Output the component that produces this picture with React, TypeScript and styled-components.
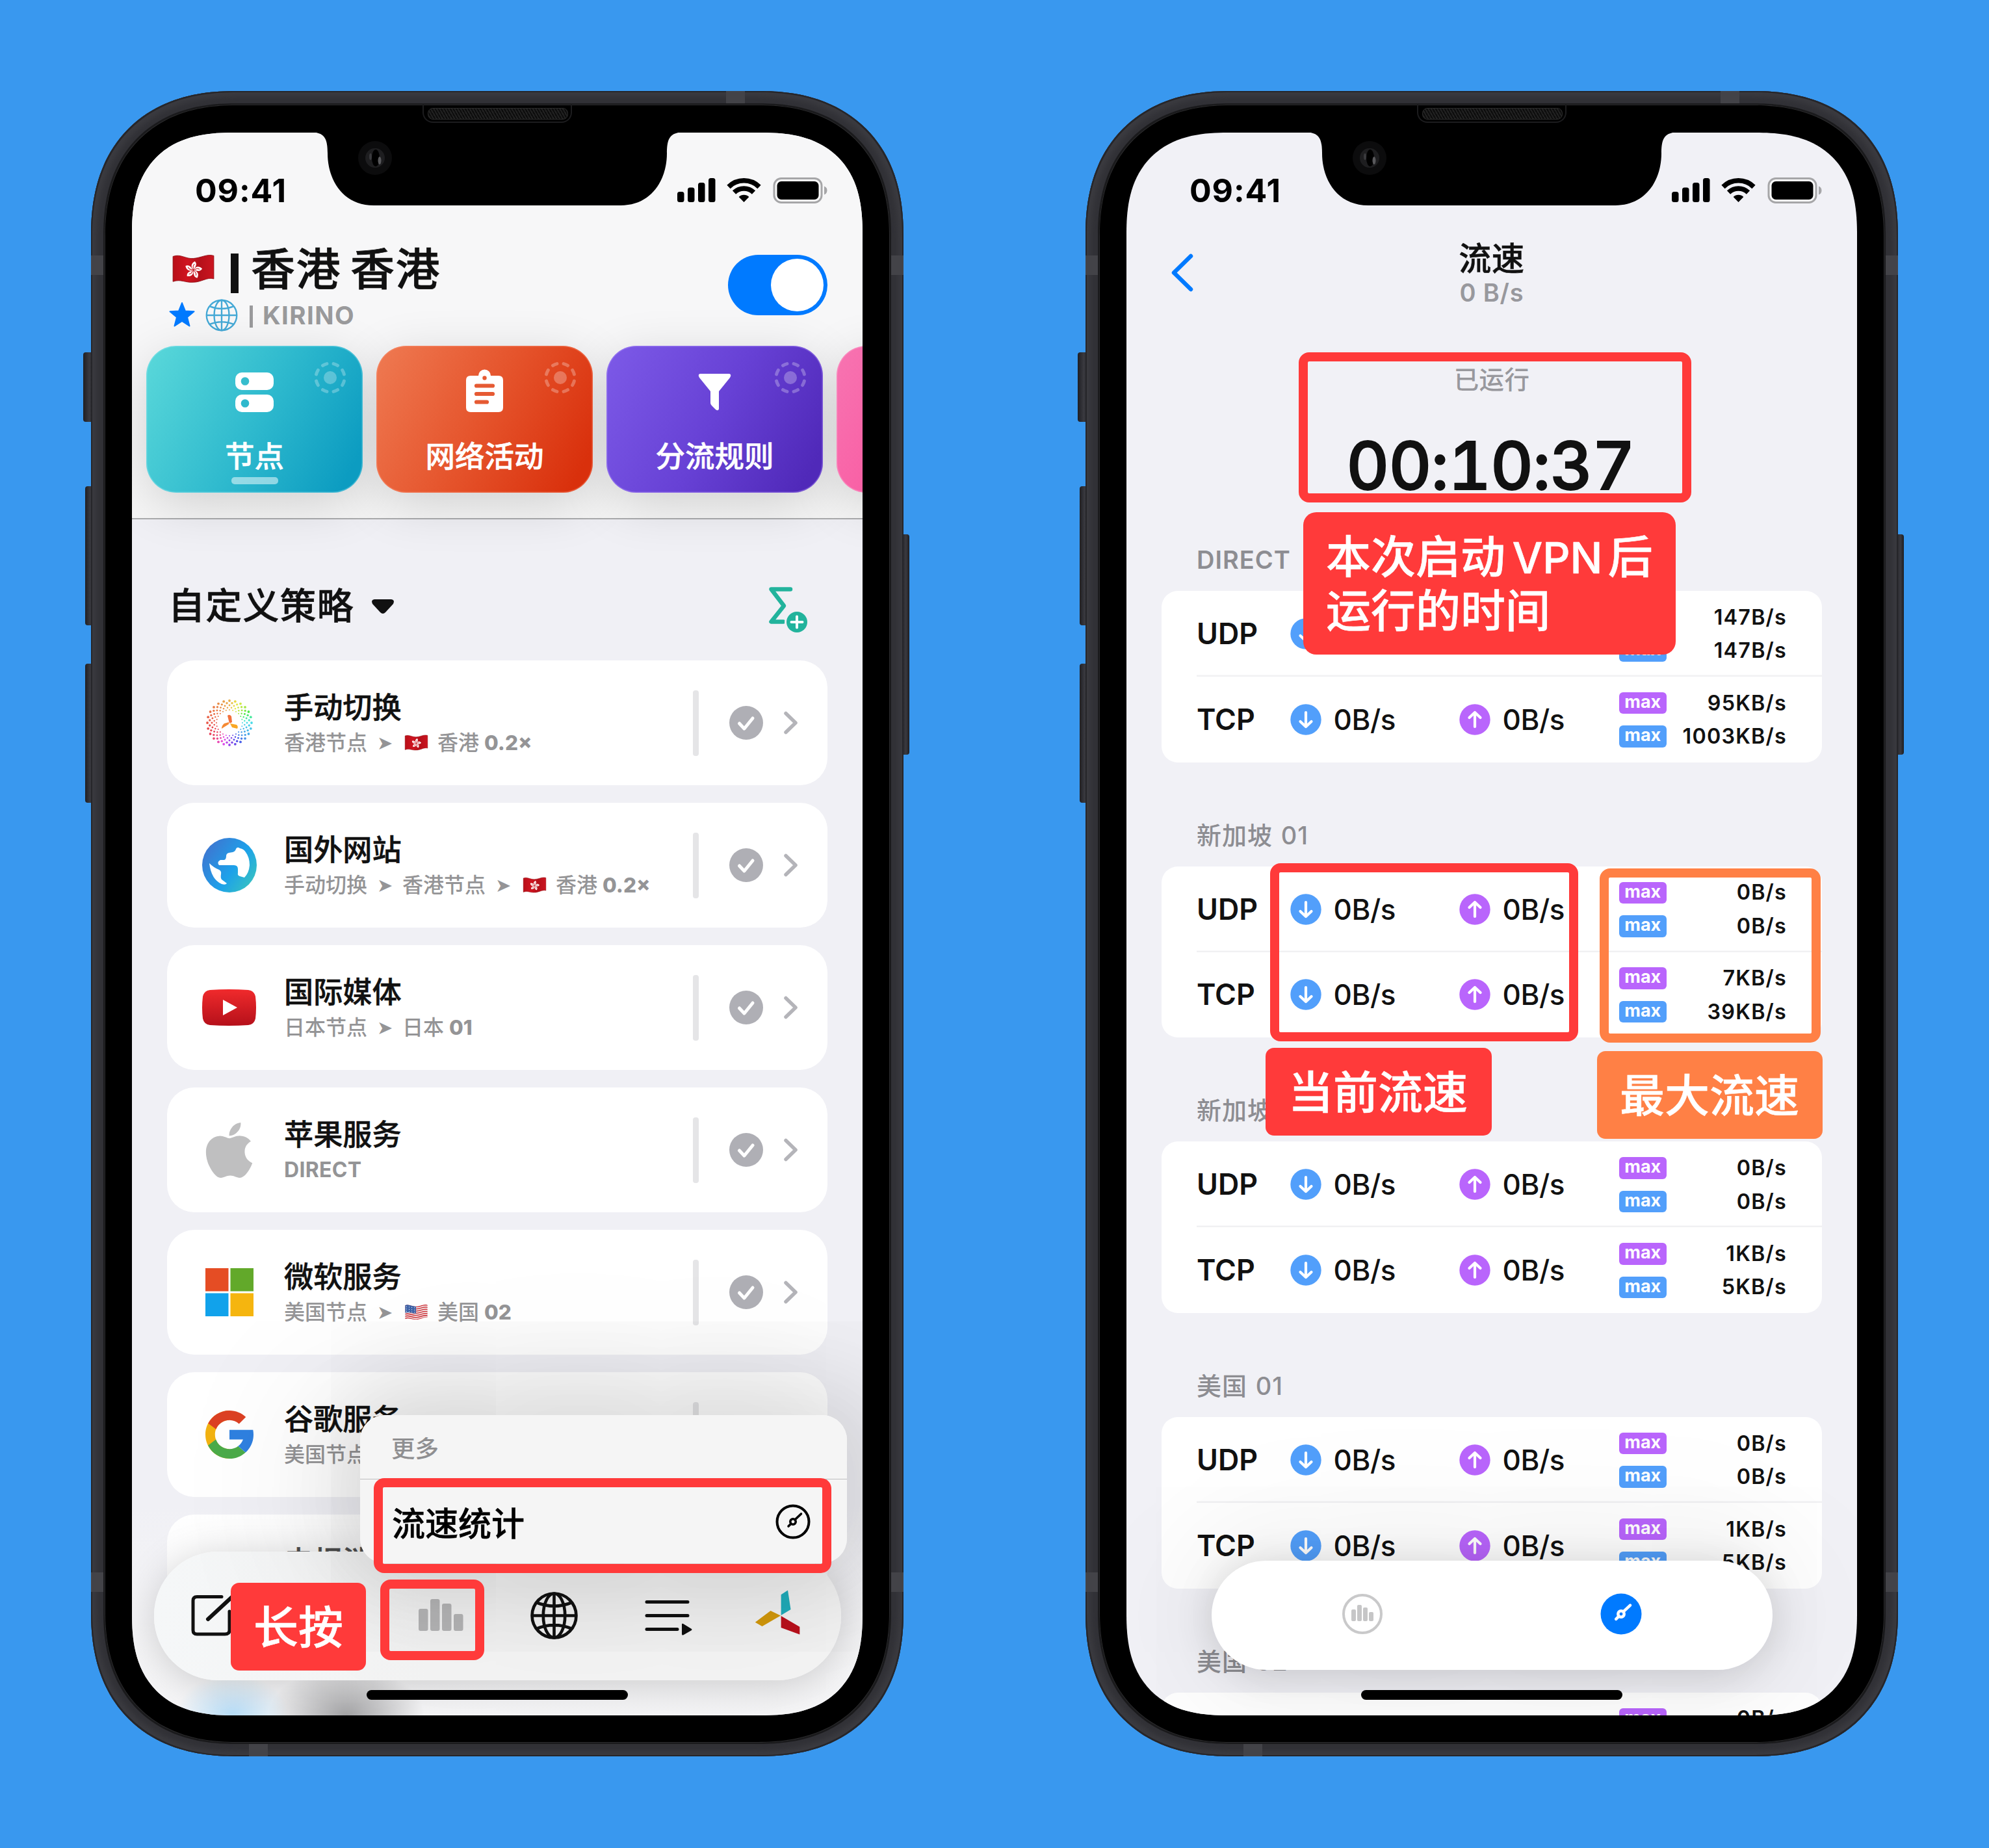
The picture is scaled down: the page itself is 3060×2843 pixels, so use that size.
import React from "react";
import styled, { createGlobalStyle, css } from "styled-components";
import { FaApple } from "react-icons/fa";

const RED = "#ff3a3a";
const ORANGE = "#ff8045";
const BLUE = "#007aff";
const FONT = `"Inter", "Noto Sans CJK SC", sans-serif`;

const Global = createGlobalStyle`
  html, body { margin: 0; padding: 0; background: #3998ef; }
  * { box-sizing: border-box; }
  svg { display: block; flex: none; overflow: visible; }
`;

const Page = styled.main`
  width: 3060px;
  height: 2843px;
  padding: 140px;
  display: flex;
  gap: 280px;
  background: #3998ef;
  font-family: ${FONT};
  color: #111;
  overflow: hidden;
`;

const semibold = css`
  font-weight: 500;
  -webkit-text-stroke: 0.5px currentColor;
`;

/* ---------- device ---------- */

const Device = styled.section`
  position: relative;
  flex: none;
  width: 1250px;
  height: 2562px;
`;

const frameCorner = (round: number, soft: number, k: number) => css`
  border-radius: ${round}px;
  @supports (corner-shape: superellipse(1.3)) {
    border-radius: ${soft}px;
    corner-shape: superellipse(${k});
  }
`;

const Frame = styled.div`
  position: relative;
  width: 100%;
  height: 100%;
  padding: 21px;
  background: #313136;
  box-shadow: inset 0 0 0 2px #26262a, inset 0 0 8px 8px #3b3b40;
  ${frameCorner(190, 222, 1.2)}
`;

const Bezel = styled.div`
  position: relative;
  height: 100%;
  padding: 43px 42px 42px;
  background: #000;
  box-shadow: 0 0 0 2px #1a1a1c, inset 0 0 0 1px #2a2a2c;
  ${frameCorner(172, 202, 1.2)}
`;

const Screen = styled.div<{ $bg: string }>`
  position: relative;
  width: 1124px;
  height: 2435px;
  display: flex;
  flex-direction: column;
  overflow: hidden;
  background: ${(p) => p.$bg};
  ${frameCorner(132, 156, 1.32)}
`;

const SideButton = styled.i<{ $side: "left" | "right"; $top: number; $h: number; $w: number }>`
  position: absolute;
  ${(p) => p.$side}: ${(p) => -p.$w}px;
  top: ${(p) => p.$top}px;
  width: ${(p) => p.$w + 4}px;
  height: ${(p) => p.$h}px;
  border-radius: 4px;
  background: linear-gradient(90deg, #1f1f23, #3a3a40 60%, #1d1d20);
`;

const Band = styled.i<{ $x: number; $y: number; $w: number; $h: number }>`
  position: absolute;
  left: ${(p) => p.$x}px;
  top: ${(p) => p.$y}px;
  width: ${(p) => p.$w}px;
  height: ${(p) => p.$h}px;
  background: #434348;
`;

const Speaker = styled.i`
  position: absolute;
  left: 489px;
  top: 0;
  width: 230px;
  height: 28px;
  border: 2px solid #1c1c1e;
  border-top: 0;
  border-radius: 0 0 16px 16px;
  &::after {
    content: "";
    position: absolute;
    left: 6px;
    top: 5px;
    width: 214px;
    height: 16px;
    border-radius: 8px;
    border: 1px solid #2a2a2a;
    background: repeating-linear-gradient(60deg, #0d0d0d 0 2px, #212121 2px 4px);
  }
`;

const NotchArt = styled.svg`
  position: absolute;
  z-index: 4;
  left: 262px;
  top: -1px;
`;

const Notch = () => (
  <NotchArt width="600" height="114" viewBox="-300 -1 600 114">
    <path
      d="M-290,-1 C-266,-1 -261,8 -261,32 C-261,72 -238,112 -190,112 H190 C238,112 261,72 261,32 C261,8 266,-1 290,-1 Z"
      fill="#000"
    />
    <circle cx="-188" cy="39" r="26" fill="#0c0c0d" />
    <circle cx="-188" cy="39" r="15" fill="#1e1e20" />
    <ellipse cx="-187" cy="39" rx="6" ry="13" fill="#000" />
    <ellipse cx="-181" cy="43" rx="2.500" ry="6" fill="#59595c" />
    <ellipse cx="-195" cy="37" rx="2" ry="5" fill="#3a3a3d" />
  </NotchArt>
);

const HomeIndicator = styled.i`
  position: absolute;
  left: 361px;
  top: 2396px;
  width: 402px;
  height: 15px;
  border-radius: 8px;
  background: #000;
`;

/* ---------- status bar ---------- */

const StatusRow = styled.div`
  flex: none;
  height: 177px;
  padding: 0 55px 0 97px;
  display: flex;
  align-items: center;
  justify-content: space-between;
`;

const Clock = styled.span`
  font-size: 50px;
  line-height: 50px;
  font-weight: 700;
  letter-spacing: 0.9px;
  color: #000;
`;

const StatusBar = () => (
  <StatusRow>
    <Clock>09:41</Clock>
    <svg width="231" height="40" viewBox="0 0 231 40">
      {[22, 15.5, 8, 1].map((y, i) => (
        <rect key={y} x={1 + i * 16} y={y} width="10.5" height={38 - y} rx="3.5" />
      ))}
      <g fill="none" stroke="#000" strokeWidth="7.5">
        <path d="M80,14.5 A33.5,33.5 0 0 1 127,14.5" />
        <path d="M88.5,23 A21.5,21.5 0 0 1 118.500,23" />
      </g>
      <path d="M103.500,38 L95.700,30 A11,11 0 0 1 111.300,30 Z" />
      <rect x="150" y="1.500" width="73" height="37" rx="11" fill="#fafafa" stroke="#a6a6a8" strokeWidth="3" />
      <rect x="154.500" y="6" width="64" height="28" rx="6.500" />
      <path d="M227,13.500 q4.500,1.500 4.500,6.500 t-4.500,6.500 z" fill="#a6a6a8" />
    </svg>
  </StatusRow>
);

const Content = styled.div`
  flex: none;
  display: flex;
  flex-direction: column;
`;

const Shell = ({ bg, children }: { bg: string; children: React.ReactNode }) => (
  <Device>
    <SideButton $side="left" $top={402} $h={107} $w={12} />
    <SideButton $side="left" $top={608} $h={214} $w={9} />
    <SideButton $side="left" $top={881} $h={214} $w={9} />
    <SideButton $side="right" $top={682} $h={339} $w={9} />
    <Frame>
      <Band $x={0} $y={253} $w={21} $h={30} />
      <Band $x={1229} $y={253} $w={21} $h={30} />
      <Band $x={977} $y={0} $w={29} $h={20} />
      <Band $x={0} $y={2279} $w={21} $h={30} />
      <Band $x={1229} $y={2279} $w={21} $h={30} />
      <Band $x={243} $y={2542} $w={29} $h={20} />
      <Bezel>
        <Speaker />
        <Screen $bg={bg}>
          <Content>{children}</Content>
          <Notch />
          <HomeIndicator />
        </Screen>
      </Bezel>
    </Frame>
  </Device>
);

/* ---------- annotations ---------- */

type Box = { $x: number; $y: number; $w: number; $h: number; $color?: string };

const Highlight = styled.i<Box>`
  position: absolute;
  z-index: 5;
  left: ${(p) => p.$x}px;
  top: ${(p) => p.$y}px;
  width: ${(p) => p.$w}px;
  height: ${(p) => p.$h}px;
  border: 14.5px solid ${(p) => p.$color ?? RED};
  border-radius: 16px;
`;

const Callout = styled.div<Box & { $r?: number }>`
  position: absolute;
  z-index: 6;
  left: ${(p) => p.$x}px;
  top: ${(p) => p.$y}px;
  width: ${(p) => p.$w}px;
  height: ${(p) => p.$h}px;
  display: flex;
  align-items: center;
  padding: 2px 0 0 35px;
  border-radius: ${(p) => p.$r ?? 13}px;
  background: ${(p) => p.$color ?? RED};
  color: #fff;
  font-size: 69px;
  line-height: 82px;
  white-space: nowrap;
  ${semibold}
`;

const Latin = styled.span`
  margin: 0 -10px 0 -8px;
  font-size: 66px;
`;

/* ---------- shared artwork ---------- */

const wave = "M2,5 C14,1 20,9 32,8 C44,7 52,1 62,4 V38 C52,35 44,43 32,43 C20,44 14,38 2,42 Z";

const HongKongFlag = ({ w }: { w: number }) => (
  <svg width={w} height={w * 0.74} viewBox="0 0 64 47">
    <defs>
      <linearGradient id="hk" x1="0" x2="1">
        <stop offset="0" stopColor="#b80f18" />
        <stop offset=".35" stopColor="#cf1420" />
        <stop offset=".65" stopColor="#b5101a" />
        <stop offset="1" stopColor="#cb1520" />
      </linearGradient>
    </defs>
    <path d={wave} fill="url(#hk)" stroke="#8e0c12" strokeWidth=".8" />
    {[0, 72, 144, 216, 288].map((a) => (
      <path
        key={a}
        transform={`translate(32,25) rotate(${a + 5})`}
        d="M0,-1 C-5,-4 -4,-10 1,-13 C5,-10 3.500,-5 0,-1 Z"
        fill="#fff"
      />
    ))}
    {[0, 72, 144, 216, 288].map((a) => (
      <path key={a} transform={`translate(32,25) rotate(${a + 5})`} d="M0,-2 Q-2,-6 1,-9" stroke="#cf1420" fill="none" />
    ))}
  </svg>
);

const UsFlag = ({ w }: { w: number }) => (
  <svg width={w} height={w * 0.74} viewBox="0 0 64 47">
    <defs>
      <clipPath id="us">
        <path d={wave} />
      </clipPath>
    </defs>
    <path d={wave} fill="#f3eeee" />
    <g clipPath="url(#us)">
      {[0, 1, 2, 3, 4, 5, 6].map((i) => (
        <path
          key={i}
          transform={`translate(0,${i * 5.6})`}
          d="M2,5 C14,1 20,9 32,8 C44,7 52,1 62,4 v2.800 C52,3.800 44,9.800 32,10.800 C20,11.800 14,3.800 2,7.800 Z"
          fill="#d0343c"
        />
      ))}
      <path d="M2,4 C12,1 20,8 31,8 V27 C20,27 14,22 2,25 Z" fill="#3d63a8" />
      {[0, 1, 2].map((r) =>
        [0, 1, 2, 3].map((c) => <circle key={`${r}${c}`} cx={6 + c * 7} cy={9 + r * 6 + c * 0.9} r="1.1" fill="#fff" />)
      )}
    </g>
  </svg>
);

const WireGlobe = ({ size, color, sw }: { size: number; color: string; sw: number }) => (
  <svg width={size} height={size} viewBox="-36 -36 72 72" fill="none" stroke={color} strokeWidth={sw}>
    <circle r="33.500" />
    <ellipse rx="16.500" ry="33.500" />
    <path d="M0,-33.500 V33.500 M-33.500,0 H33.500 M-27,-20 Q0,-9 27,-20 M-27,20 Q0,9 27,20" />
  </svg>
);

const Dial = ({ color, sw }: { color: string; sw: number }) => (
  <g fill="none" stroke={color} strokeWidth={sw} strokeLinecap="round">
    <circle r="4.200" />
    <path d="M3.200,-3.200 L12.500,-12 M-3.200,3.200 L-7,7" />
  </g>
);

/* ---------- phone one ---------- */

const Header = styled.header`
  position: relative;
  z-index: 1;
  height: 595px;
  flex: none;
  border-bottom: 2px solid #abacae;
  background: linear-gradient(#f7f7f8 60%, #f6f6f6);
`;

const TitleRow = styled.div`
  height: 128px;
  padding: 0 54px 0 61px;
  display: flex;
  justify-content: space-between;
`;

const Titles = styled.div`
  display: flex;
  flex-direction: column;
  gap: 14px;
`;

const NodeName = styled.div`
  height: 66px;
  display: flex;
  align-items: center;
  font-size: 68px;
  line-height: 66px;
  white-space: nowrap;
  letter-spacing: 1.6px;
  word-spacing: -6px;
  ${semibold}
  -webkit-text-stroke-width: 0.7px;
`;

const Pipe = styled.i<{ $big?: boolean }>`
  flex: none;
  width: ${(p) => (p.$big ? 12 : 5)}px;
  height: ${(p) => (p.$big ? 61 : 34)}px;
  margin: ${(p) => (p.$big ? "13px 19px 0 24px" : "4px 15px 0 18px")};
  background: ${(p) => (p.$big ? "#111" : "#9a9a9c")};
`;

const Provider = styled.div`
  height: 48px;
  display: flex;
  align-items: center;
  margin-left: -4px;
  font-size: 38.5px;
  line-height: 48px;
  font-weight: 700;
  letter-spacing: 1.4px;
  color: #9a9a9c;
`;

const Toggle = styled.div`
  width: 153px;
  height: 93px;
  margin-top: 11px;
  padding: 6px;
  border-radius: 47px;
  background: ${BLUE};
  display: flex;
  justify-content: flex-end;
  &::after {
    content: "";
    width: 81px;
    height: 81px;
    border-radius: 50%;
    background: #fff;
  }
`;

const Cards = styled.div`
  display: flex;
  gap: 21px;
  margin-top: 23px;
  padding-left: 22px;
  isolation: isolate;
`;

const Card = styled.div<{ $from: string; $mid: string; $to: string; $edge: string }>`
  position: relative;
  flex: none;
  width: 333px;
  height: 226px;
  padding-top: 39px;
  display: flex;
  flex-direction: column;
  align-items: center;
  border-radius: 46px;
  background: linear-gradient(118deg, ${(p) => p.$from} 4%, ${(p) => p.$mid} 50%, ${(p) => p.$to} 92%);
  box-shadow: inset 0 0 0 1.5px ${(p) => p.$edge};
  color: #fff;
  &::before {
    content: "";
    position: absolute;
    inset: 10px;
    z-index: -1;
    border-radius: 40px;
    box-shadow: 0 18px 80px 8px rgba(0, 0, 0, 0.16);
  }
`;

const CardIcon = styled.div`
  height: 64px;
  display: flex;
  align-items: center;
`;

const CardLabel = styled.span`
  margin-top: 43px;
  font-size: 45.500px;
  line-height: 50px;
  ${semibold}
`;

const Underline = styled.i`
  width: 72px;
  height: 11px;
  margin-top: 6px;
  border-radius: 5px;
  background: rgba(255, 255, 255, 0.5);
`;

const RingArt = styled.svg`
  position: absolute;
  right: 24px;
  top: 23px;
`;

const Ring = () => (
  <RingArt width="52" height="52" viewBox="-26 -26 52 52" fill="none" opacity=".27">
    <circle r="10" fill="#fff" />
    {[22.5, 67.5, 112.5, 157.5, 202.5, 247.5, 292.5, 337.5].map((a) => (
      <path key={a} transform={`rotate(${a})`} d="M-3.500,-21.700 A22,22 0 0 1 3.500,-21.700" stroke="#fff" strokeWidth="5" strokeLinecap="round" />
    ))}
  </RingArt>
);

const ServerIcon = () => (
  <svg width="59" height="62" viewBox="0 0 59 62">
    <rect y="1" width="59" height="27" rx="10" fill="#fff" />
    <rect y="35" width="59" height="27" rx="10" fill="#fff" />
    <circle cx="15" cy="14.500" r="6.300" fill="#36bdcd" />
    <circle cx="15" cy="48.500" r="6.300" fill="#2fb9cd" />
  </svg>
);

const ClipIcon = () => (
  <svg width="57" height="62" viewBox="0 0 57 62">
    <path d="M7,6 H19 A9.500,9.500 0 0 1 38,6 H50 Q57,6 57,13 V55 Q57,62 50,62 H7 Q0,62 0,55 V13 Q0,6 7,6 Z" fill="#fff" />
    <circle cx="28.500" cy="9.500" r="3.200" fill="#e65a33" />
    <path d="M16,21.500 H41 M16,34 H41 M16,46.500 H32" stroke="#e65a33" strokeWidth="6.200" strokeLinecap="round" />
  </svg>
);

const FunnelIcon = () => (
  <svg width="51" height="57" viewBox="0 0 51 57">
    <path d="M3,0 H48 Q52,1 49,6 L32,27 V54 Q31,58 27,55 L21,49 Q19,47 19,45 V27 L2,6 Q-1,1 3,0 Z" fill="#fff" />
  </svg>
);

const SectionHead = styled.div`
  flex: none;
  height: 217px;
  padding: 48px 30px 0 56px;
  display: flex;
  align-items: center;
  font-size: 56px;
  line-height: 60px;
  letter-spacing: 1.2px;
  ${semibold}
  -webkit-text-stroke-width: 0.6px;
  svg:last-child { margin-left: auto; }
`;

const Caret = styled.svg`
  margin: 3px 0 0 27px;
`;

const List = styled.div`
  margin: 0 54px;
  display: flex;
  flex-direction: column;
  gap: 27.300px;
  padding-top: 0.300px;
`;

const Row = styled.div`
  flex: none;
  height: 191.700px;
  display: flex;
  align-items: center;
  padding-right: 46px;
  border-radius: 42px;
  background: #fff;
`;

const RowIcon = styled.div`
  width: 84px;
  margin-left: 53.500px;
  display: flex;
  justify-content: center;
`;

const RowText = styled.div`
  flex: 1;
  margin-left: 42.500px;
  padding-top: 8px;
`;

const RowTitle = styled.div`
  height: 53px;
  font-size: 45.200px;
  line-height: 52px;
  ${semibold}
`;

const RowSub = styled.div`
  height: 53px;
  display: flex;
  align-items: center;
  gap: 14px;
  font-size: 32px;
  line-height: 52px;
  font-weight: 500;
  color: #949496;
  white-space: nowrap;
  b { font-weight: 800; font-size: 31.500px; margin-left: -6px; }
`;

const Direct = styled.b`
  && { margin-left: 0; font-size: 32px; font-weight: 700; letter-spacing: 0.3px; }
`;

const Arrow = styled.span`
  width: 24px;
  margin: 0 1px;
  font-family: "DejaVu Sans", sans-serif;
  font-size: 29px;
  text-align: center;
`;

const Rule = styled.i`
  width: 9px;
  height: 101px;
  border-radius: 4px;
  background: #e5e5e7;
`;

const Trail = styled.svg`
  margin-left: 46px;
`;

const palette = [38, 85, 185, 212, 270, 345, 365, 380, 398];
const hueAt = (deg: number) => {
  const t = (((deg % 360) + 360) % 360) / 45;
  const i = Math.floor(t);
  return palette[i] + (palette[i + 1] - palette[i]) * (t - i);
};

const RainbowIcon = () => (
  <svg width="72" height="72" viewBox="-36 -36 72 72">
    {[0, 1, 2, 3, 4].flatMap((ring) =>
      Array.from({ length: 24 }, (_, i) => {
        const deg = i * 15 + ring * 7.5;
        const r = 34 - ring * 3.5;
        const a = (deg * Math.PI) / 180;
        return (
          <circle key={`${ring}-${i}`} cx={r * Math.sin(a)} cy={-r * Math.cos(a)} r={1.9 - ring * 0.22} fill={`hsl(${hueAt(deg)} 78% 60%)`} />
        );
      })
    )}
    <g transform="translate(0,1)">
      <path d="M0,0 L-3,-12 Q0,-15 3,-11 L4,-2 Z" fill="#f2703c" />
      <path d="M-1,1 L-12,8 Q-12,3 -8,0 L-1,-2 Z" fill="#f58a33" />
      <path d="M1,0 L11,2 Q14,5 12,8 L4,6 Z" fill="#f9a824" />
    </g>
  </svg>
);

const EarthIcon = () => (
  <svg width="84" height="84" viewBox="0 0 84 84">
    <defs>
      <linearGradient id="earth" x1="0" y1=".1" x2="1" y2=".8">
        <stop offset=".1" stopColor="#3c78d2" />
        <stop offset=".6" stopColor="#1da1ea" />
        <stop offset="1" stopColor="#38c3c0" />
      </linearGradient>
    </defs>
    <circle cx="42" cy="42" r="42" fill="url(#earth)" />
    <path
      d="M26,42 Q22,37 28,34 L34,34 Q37,33 37,28 Q37,24 41,23 L47,22 Q51,21 52,17 Q54,13 58,16 Q64,17 67,22 Q73,30 73,42 Q72,54 65,61 L58,59 Q54,58 55,54 V48 Q55,42 49,42 Z"
      fill="#fff"
    />
    <path d="M11,39 Q18,46 26,49 Q30,51 29,56 Q28,61 30,64 L38,70 Q36,73 30,71 Q14,64 11,39 Z" fill="#fff" />
  </svg>
);

const TubeIcon = () => (
  <svg width="83" height="56" viewBox="0 0 83 56">
    <defs>
      <linearGradient id="tube" x1="0" y1="0" x2="0" y2="1">
        <stop offset="0" stopColor="#f02a2c" />
        <stop offset="1" stopColor="#b5101a" />
      </linearGradient>
    </defs>
    <path d="M12,1 Q41,-1 71,1 Q80,2 82,11 Q84,28 82,45 Q80,54 71,55 Q41,57 12,55 Q3,54 1,45 Q-1,28 1,11 Q3,2 12,1 Z" fill="url(#tube)" />
    <path d="M32,16 L54,28 L32,40 Z" fill="#fff" />
  </svg>
);

const WindowsIcon = () => (
  <svg width="74" height="74" viewBox="0 0 74 74">
    <path d="M0,0 H35.500 V35.500 H0 Z" fill="#e54d24" />
    <path d="M38.500,0 H74 V35.500 H38.500 Z" fill="#62a92a" />
    <path d="M0,38.500 H35.500 V74 H0 Z" fill="#11a2eb" />
    <path d="M38.500,38.500 H74 V74 H38.500 Z" fill="#f5b50f" />
  </svg>
);

const GoogleIcon = () => (
  <svg width="74" height="74" viewBox="4 4 40 40">
    <path fill="#f2b211" d="M24,4C12.955,4,4,12.955,4,24c0,11.045,8.955,20,20,20V36c-6.627,0-12-5.373-12-12c0-6.627,5.373-12,12-12Z" />
    <path fill="#dc4124" d="M6.306,14.691l6.571,4.819C14.655,15.108,18.961,12,24,12c3.059,0,5.842,1.154,7.961,3.039l5.657-5.657C34.046,6.053,29.268,4,24,4C16.318,4,9.656,8.337,6.306,14.691z" />
    <path fill="#4bab49" d="M24,44c5.166,0,9.860-1.977,13.409-5.192l-6.190-5.238C29.211,35.091,26.715,36,24,36c-5.202,0-9.619-3.317-11.283-7.946l-6.522,5.025C9.505,39.556,16.227,44,24,44z" />
    <path fill="#2f80e0" d="M43.611,20.083H24v8h11.303c-0.792,2.237-2.231,4.166-4.087,5.571l6.193,5.153C36.971,39.205,44,34,44,24C44,22.659,43.862,21.350,43.611,20.083z" />
  </svg>
);

const FlagBox = styled.span`
  margin-left: 3px;
  display: flex;
`;

const rows: { icon: React.ReactNode; title: string; sub: React.ReactNode }[] = [
  {
    icon: <RainbowIcon />,
    title: "手动切换",
    sub: (<><span>香港节点</span><Arrow>➤</Arrow><FlagBox><HongKongFlag w={37} /></FlagBox><span>香港</span><b>0.2×</b></>),
  },
  {
    icon: <EarthIcon />,
    title: "国外网站",
    sub: (<><span>手动切换</span><Arrow>➤</Arrow><span>香港节点</span><Arrow>➤</Arrow><FlagBox><HongKongFlag w={37} /></FlagBox><span>香港</span><b>0.2×</b></>),
  },
  {
    icon: <TubeIcon />,
    title: "国际媒体",
    sub: (<><span>日本节点</span><Arrow>➤</Arrow><span>日本</span><b>01</b></>),
  },
  {
    icon: <FaApple color="#bfbfc0" size={97} />,
    title: "苹果服务",
    sub: <Direct>DIRECT</Direct>,
  },
  {
    icon: <WindowsIcon />,
    title: "微软服务",
    sub: (<><span>美国节点</span><Arrow>➤</Arrow><FlagBox><UsFlag w={37} /></FlagBox><span>美国</span><b>02</b></>),
  },
  { icon: <GoogleIcon />, title: "谷歌服务", sub: <span>美国节点</span> },
  { icon: null, title: "电报消息", sub: null },
];

const BottomVeil = styled.div`
  position: absolute;
  left: 0;
  right: 0;
  top: 2110px;
  bottom: 0;
  background:
    radial-gradient(ellipse 85px 60px at 155px 322px, rgba(160, 214, 250, 0.7), transparent),
    radial-gradient(ellipse 120px 75px at 330px 325px, rgba(120, 120, 122, 0.65), transparent),
    linear-gradient(rgba(246, 246, 247, 0), rgba(246, 246, 247, 0.9) 70%);
`;

const TabBar = styled.nav`
  position: absolute;
  left: 34px;
  top: 2183px;
  width: 1057px;
  height: 198px;
  padding: 0 60px 2px 56px;
  display: flex;
  align-items: center;
  border-radius: 98px;
  background: linear-gradient(90deg, #f5f7f8, #f3f3f3 40%);
  box-shadow: 0 8px 60px rgba(0, 0, 0, 0.17);
`;

const TabItem = styled.div<{ $gap?: number }>`
  margin-left: ${(p) => p.$gap ?? 0}px;
`;

const Menu = styled.div`
  position: absolute;
  left: 351px;
  top: 1973px;
  width: 749px;
  height: 228px;
  border-radius: 38px;
  background: #f5f5f5;
  &::before {
    content: "";
    position: absolute;
    inset: 0;
    z-index: -1;
    border-radius: 38px;
    box-shadow: 0 0 120px 30px rgba(0, 0, 0, 0.08), 0 0 290px 40px rgba(0, 0, 0, 0.14);
  }
  isolation: isolate;
`;

const MenuSheet = styled.div`
  height: 100%;
  border-radius: 38px;
  background: #f5f5f5;
`;

const MenuTitle = styled.div`
  height: 99px;
  padding: 4px 48px 0;
  border-bottom: 1.500px solid #bdbdbf;
  font-size: 36.500px;
  line-height: 96px;
  font-weight: 500;
  color: #8f8f91;
`;

const MenuItem = styled.div`
  height: 129px;
  padding: 0 56px 0 49px;
  display: flex;
  align-items: center;
  justify-content: space-between;
  font-size: 51px;
  color: #000;
  ${semibold}
`;

const GlobeGap = styled.span`
  margin-left: 16px;
`;

const PhoneOne = () => (
  <Shell bg="#f0f0f5">
    <Header>
      <StatusBar />
      <TitleRow>
        <Titles>
          <NodeName>
            <HongKongFlag w={67} />
            <Pipe $big />
            <span>香港 香港</span>
          </NodeName>
          <Provider>
            <svg width="40" height="39" viewBox="0 0 40 39">
              <path d="M20,0 L25,12.500 L38.500,13.300 L28,22 L31.500,35.500 L20,28 L8.500,35.500 L12,22 L1.500,13.300 L15,12.500 Z" fill={BLUE} stroke={BLUE} strokeWidth="2" strokeLinejoin="round" />
            </svg>
            <GlobeGap><WireGlobe size={50} color="#45a9d6" sw={3.4} /></GlobeGap>
            <Pipe />
            KIRINO
          </Provider>
        </Titles>
        <Toggle />
      </TitleRow>
      <Cards>
        <Card $from="#57d6d9" $mid="#2fbace" $to="#0c9cc1" $edge="rgba(160,235,245,.35)">
          <CardIcon><ServerIcon /></CardIcon>
          <CardLabel>节点</CardLabel>
          <Underline />
          <Ring />
        </Card>
        <Card $from="#ee774f" $mid="#e5532b" $to="#d9300c" $edge="rgba(255,150,120,.4)">
          <CardIcon><ClipIcon /></CardIcon>
          <CardLabel>网络活动</CardLabel>
          <Ring />
        </Card>
        <Card $from="#7b58e6" $mid="#6741d5" $to="#5029b9" $edge="rgba(180,150,255,.4)">
          <CardIcon><FunnelIcon /></CardIcon>
          <CardLabel>分流规则</CardLabel>
          <Ring />
        </Card>
        <Card $from="#f772b0" $mid="#fa58a0" $to="#f8488f" $edge="rgba(255,170,210,.4)" />
      </Cards>
    </Header>
    <SectionHead>
      自定义策略
      <Caret width="34" height="22" viewBox="0 0 34 22">
        <path d="M4,0 H30 Q36,1 33,7 L21,20 Q17,24 13,20 L1,7 Q-2,1 4,0 Z" fill="#111" />
      </Caret>
      <svg width="114" height="72" viewBox="0 0 114 72">
        <path d="M33,10.500 H3.500 L23,36 L3.500,60.500 H22" fill="none" stroke="#22b39c" strokeWidth="6.500" strokeLinecap="round" strokeLinejoin="round" />
        <circle cx="43" cy="61" r="19" fill="#f0f0f5" />
        <circle cx="43" cy="61" r="16" fill="#22b39c" />
        <path d="M43,52.500 V69.500 M34.500,61 H51.500" stroke="#fff" strokeWidth="4" strokeLinecap="round" />
      </svg>
    </SectionHead>
    <List>
      {rows.map((r) => (
        <Row key={r.title}>
          <RowIcon>{r.icon}</RowIcon>
          <RowText>
            <RowTitle>{r.title}</RowTitle>
            <RowSub>{r.sub}</RowSub>
          </RowText>
          <Rule />
          <Trail width="106" height="54" viewBox="0 0 106 54">
            <circle cx="27" cy="27" r="26" fill="#afafb5" />
            <path d="M16.500,28 L24,36 L37,20" fill="none" stroke="#fff" strokeWidth="5" strokeLinecap="round" strokeLinejoin="round" />
            <path d="M88,12.500 L103,27 L88,41.500" fill="none" stroke="#b4b4b9" strokeWidth="5.500" strokeLinecap="round" strokeLinejoin="round" />
          </Trail>
        </Row>
      ))}
    </List>
    <BottomVeil />
    <TabBar>
      <TabItem>
        <svg width="72" height="72" viewBox="0 0 72 72" fill="none" stroke="#111" strokeWidth="5" strokeLinecap="round" strokeLinejoin="round">
          <path d="M48,7.500 H10 Q4,7.500 4,13.500 V59 Q4,65 10,65 H53 Q60,65 60,59 V30" />
          <path d="M27,42 L68,4" strokeWidth="6" />
        </svg>
      </TabItem>
      <TabItem $gap={278.5}>
        <svg width="70" height="72" viewBox="0 0 70 72" fill="#b6b6b7">
          {[24, 9, 16, 32].map((y, i) => (
            <rect key={y} x={i * 18} y={y + 2} width="14.500" height={58 - y} rx="3" />
          ))}
        </svg>
      </TabItem>
      <TabItem $gap={102}>
        <WireGlobe size={73} color="#111" sw={4.6} />
      </TabItem>
      <TabItem $gap={103}>
        <svg width="73" height="72" viewBox="0 0 73 72">
          <path d="M3,15.500 H66 M3,36.500 H66 M3,57.500 H50" stroke="#111" strokeWidth="5" strokeLinecap="round" />
          <path d="M57,50 Q57,48 59,49 L72,57 Q73,58 72,59 L59,66.500 Q57,67 57,65 Z" fill="#111" />
        </svg>
      </TabItem>
      <TabItem $gap={96.5}>
        <svg width="70" height="72" viewBox="1161 2449 70 72">
          <path d="M1212,2446.400 L1216.500,2476 L1201.600,2485 V2453.300 Z" fill="#20aebc" />
          <path d="M1185.500,2478 L1201,2485.400 L1172.500,2502 L1161.800,2495.800 Z" fill="#d49a0c" />
          <path d="M1201.600,2486 L1230.300,2502.800 V2514.500 L1201.600,2504 Z" fill="#bb111c" />
        </svg>
      </TabItem>
    </TabBar>
    <Menu>
      <MenuSheet>
        <MenuTitle>更多</MenuTitle>
        <MenuItem>
          流速统计
          <svg width="54" height="54" viewBox="-27 -27 54 54">
            <circle r="24.500" fill="none" stroke="#000" strokeWidth="4" />
            <Dial color="#000" sw={3.6} />
          </svg>
        </MenuItem>
      </MenuSheet>
    </Menu>
    <Highlight $x={372} $y={2070} $w={704} $h={146} />
    <Highlight $x={382} $y={2226} $w={160} $h={124} />
    <Callout $x={152} $y={2231} $w={208} $h={135}>长按</Callout>
  </Shell>
);

/* ---------- phone two ---------- */

const NavBar = styled.div`
  flex: none;
  height: 89px;
  margin-top: -9px;
  padding: 0 66px;
  display: grid;
  grid-template-columns: 120px 1fr 120px;
  align-items: start;
`;

const BackArt = styled.svg`
  margin-top: 16px;
`;

const NavTitle = styled.div`
  padding-top: 1px;
  text-align: center;
  font-size: 50px;
  line-height: 50px;
  letter-spacing: 0.8px;
  ${semibold}
`;

const NavSub = styled.div`
  margin-top: 8px;
  font-size: 38px;
  line-height: 38px;
  font-weight: 600;
  -webkit-text-stroke-width: 0;
  color: #98989d;
`;

const Uptime = styled.div`
  height: 288px;
  padding-top: 103px;
  flex: none;
  text-align: center;
`;

const UptimeLabel = styled.div`
  font-size: 38.500px;
  line-height: 40px;
  font-weight: 500;
  letter-spacing: 0.4px;
  color: #98989d;
`;

const UptimeValue = styled.div`
  margin-top: 60px;
  padding-right: 4px;
  font-size: 102px;
  line-height: 104px;
  font-weight: 500;
  -webkit-text-stroke: 1.800px currentColor;
  letter-spacing: -1px;
  font-feature-settings: "tnum";
  white-space: nowrap;
`;

const GroupHead = styled.div<{ $latin?: boolean }>`
  flex: none;
  height: 160px;
  padding: 0 0 28px 108px;
  display: flex;
  align-items: flex-end;
  font-size: 38px;
  line-height: 40px;
  font-weight: ${(p) => (p.$latin ? 600 : 500)};
  letter-spacing: 1px;
  word-spacing: 1.500px;
  color: #8d8d92;
`;

const Panel = styled.div`
  flex: none;
  height: 263.700px;
  margin: 0 54px;
  border-radius: 25px;
  background: #fff;
`;

const SpeedRow = styled.div`
  height: 131.850px;
  margin-left: 54px;
  display: grid;
  grid-template-columns: 144px 260px 245px 1fr;
  align-items: center;
  & + & { box-shadow: 0 -2.500px 0 #f1f1f3; }
`;

const Proto = styled.span`
  font-size: 44.700px;
  font-weight: 600;
`;

const Rate = styled.span`
  display: flex;
  align-items: center;
  gap: 18.500px;
  font-size: 44px;
  font-weight: 500;
  letter-spacing: -0.4px;
  white-space: nowrap;
`;

const Peaks = styled.div`
  display: flex;
  flex-direction: column;
  gap: 18px;
  padding: 1px 54px 0 1px;
`;

const Peak = styled.div`
  height: 33.500px;
  display: flex;
  align-items: center;
  justify-content: space-between;
  font-size: 32.300px;
  line-height: 34px;
  font-weight: 600;
  letter-spacing: 1.200px;
  white-space: nowrap;
`;

const Tag = styled.span<{ $up?: boolean }>`
  width: 72.500px;
  height: 33.500px;
  border-radius: 6px;
  background: ${(p) => (p.$up ? "#b965fc" : "#529ffb")};
  color: #fff;
  font-size: 27px;
  line-height: 30px;
  font-weight: 700;
  letter-spacing: 0;
  text-align: center;
`;

const ArrowDot = ({ up }: { up?: boolean }) => (
  <svg width="48" height="48" viewBox="-24 -24 48 48">
    <circle r="23.700" fill={up ? "#b965fc" : "#529ffb"} />
    <path
      transform={up ? "rotate(180)" : undefined}
      d="M0,-11 V10.500 M-8.500,3 L0,11 L8.500,3"
      fill="none"
      stroke="#fff"
      strokeWidth="4.200"
      strokeLinecap="round"
      strokeLinejoin="round"
    />
  </svg>
);

const groups = [
  { name: "DIRECT", latin: true, rates: [["UDP", "147B/s", "147B/s"], ["TCP", "95KB/s", "1003KB/s"]] },
  { name: "新加坡 01", rates: [["UDP", "0B/s", "0B/s"], ["TCP", "7KB/s", "39KB/s"]] },
  { name: "新加坡 02", rates: [["UDP", "0B/s", "0B/s"], ["TCP", "1KB/s", "5KB/s"]] },
  { name: "美国 01", rates: [["UDP", "0B/s", "0B/s"], ["TCP", "1KB/s", "5KB/s"]] },
  { name: "美国 02", rates: [["UDP", "0B/s", "0B/s"]] },
];

const Dock = styled.nav`
  position: absolute;
  left: 131px;
  top: 2197px;
  width: 863px;
  height: 168px;
  padding: 0 201px 4px 200px;
  display: flex;
  align-items: center;
  justify-content: space-between;
  border-radius: 84px;
  background: #fff;
  box-shadow: 0 6px 60px rgba(0, 0, 0, 0.15), 0 0 220px 40px rgba(0, 0, 0, 0.08);
`;

const PhoneTwo = () => (
  <Shell bg="#f1f1f6">
    <StatusBar />
    <NavBar>
      <BackArt width="38" height="62" viewBox="0 0 38 62">
        <path d="M33,6 L7,31.500 L33,57" fill="none" stroke={BLUE} strokeWidth="6.500" strokeLinecap="round" strokeLinejoin="round" />
      </BackArt>
      <NavTitle>
        流速
        <NavSub>0 B/s</NavSub>
      </NavTitle>
    </NavBar>
    <Uptime>
      <UptimeLabel>已运行</UptimeLabel>
      <UptimeValue>00:10:37</UptimeValue>
    </Uptime>
    {groups.map((g) => (
      <React.Fragment key={g.name}>
        <GroupHead $latin={g.latin}>{g.name}</GroupHead>
        <Panel>
          {g.rates.map(([proto, up, down]) => (
            <SpeedRow key={proto}>
              <Proto>{proto}</Proto>
              <Rate><ArrowDot />0B/s</Rate>
              <Rate><ArrowDot up />0B/s</Rate>
              <Peaks>
                <Peak><Tag $up>max</Tag>{up}</Peak>
                <Peak><Tag>max</Tag>{down}</Peak>
              </Peaks>
            </SpeedRow>
          ))}
        </Panel>
      </React.Fragment>
    ))}
    <Dock>
      <svg width="64" height="64" viewBox="-32 -32 64 64">
        <circle r="29" fill="none" stroke="#c9c9ca" strokeWidth="4" />
        {[-7, -14, -10, -3].map((y, i) => (
          <rect key={y} x={-17 + i * 9} y={y} width="7" height={11 - y} rx="2" fill="#c6c6c7" />
        ))}
      </svg>
      <svg width="64" height="64" viewBox="-32 -32 64 64">
        <circle r="31.500" fill={BLUE} />
        <g transform="scale(1.12)"><Dial color="#fff" sw={4} /></g>
      </svg>
    </Dock>
    <Highlight $x={265} $y={338} $w={604} $h={231} />
    <Callout $x={272} $y={584} $w={573} $h={219} $r={20}>
      <div>
        本次启动 <Latin>VPN</Latin> 后<br />
        运行的时间
      </div>
    </Callout>
    <Highlight $x={221} $y={1124} $w={474} $h={274} />
    <Highlight $x={728} $y={1132} $w={340} $h={268} $color={ORANGE} />
    <Callout $x={214} $y={1408} $w={348} $h={135}>当前流速</Callout>
    <Callout $x={724} $y={1413} $w={347} $h={135} $color={ORANGE}>最大流速</Callout>
  </Shell>
);

const App = () => (
  <Page>
    <Global />
    <PhoneOne />
    <PhoneTwo />
  </Page>
);

export default App;
